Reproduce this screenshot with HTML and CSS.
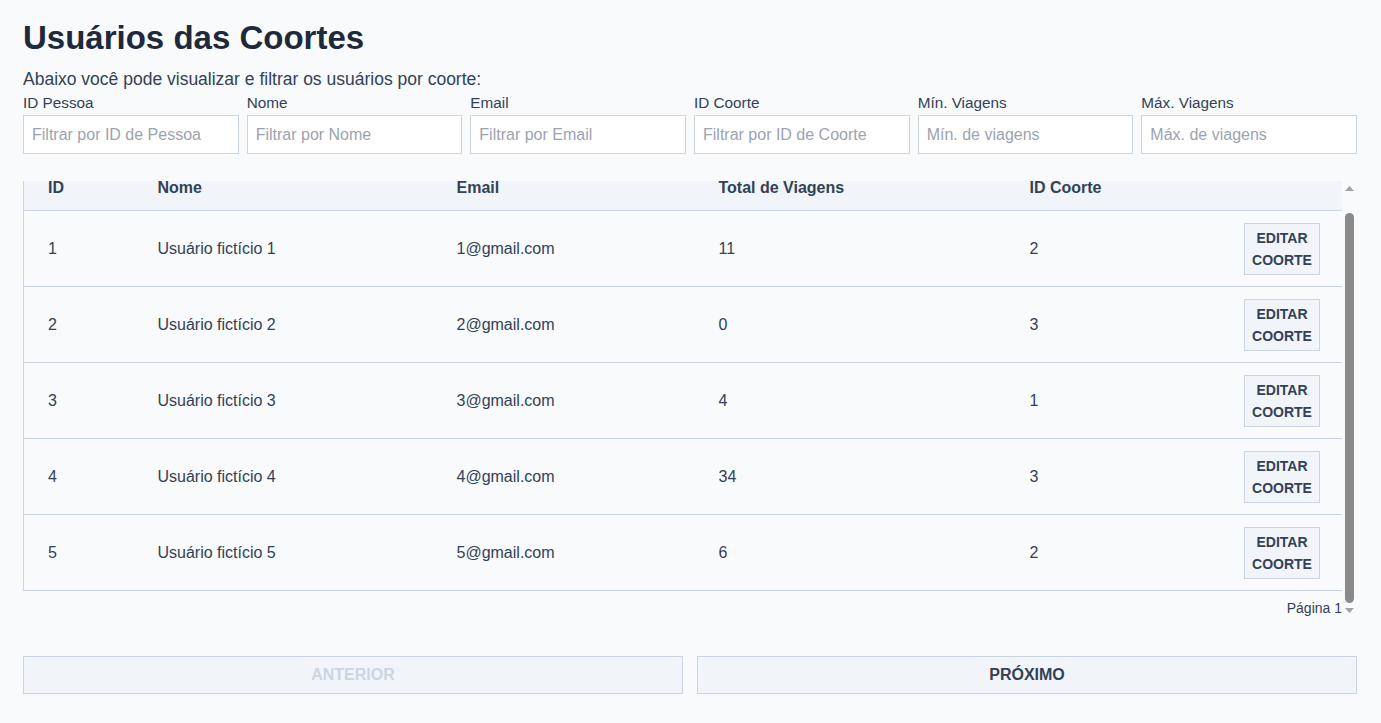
FILE: index.html
```html
<!DOCTYPE html>
<html lang="pt-BR">
<head>
<meta charset="utf-8">
<title>Usuários das Coortes</title>
<link rel="stylesheet" href="styles.css">
</head>
<body>
<main class="page">
  <h1 class="title">Usuários das Coortes</h1>
  <p class="subtitle">Abaixo você pode visualizar e filtrar os usuários por coorte:</p>
  <div class="filters">
    <label class="field"><span class="field-label">ID Pessoa</span><input class="field-input" placeholder="Filtrar por ID de Pessoa"></label>
    <label class="field"><span class="field-label">Nome</span><input class="field-input" placeholder="Filtrar por Nome"></label>
    <label class="field"><span class="field-label">Email</span><input class="field-input" placeholder="Filtrar por Email"></label>
    <label class="field"><span class="field-label">ID Coorte</span><input class="field-input" placeholder="Filtrar por ID de Coorte"></label>
    <label class="field"><span class="field-label">Mín. Viagens</span><input class="field-input" placeholder="Mín. de viagens"></label>
    <label class="field"><span class="field-label">Máx. Viagens</span><input class="field-input" placeholder="Máx. de viagens"></label>
  </div>
  <div class="table-frame">
    <div class="table-scroll" id="tableScroll">
      <table class="users">
        <caption class="caption">Página 1</caption>
        <colgroup>
          <col class="c-id"><col class="c-nome"><col class="c-email"><col class="c-total"><col class="c-coorte"><col>
        </colgroup>
        <thead>
          <tr><th>ID</th><th>Nome</th><th>Email</th><th>Total de Viagens</th><th>ID Coorte</th><th></th></tr>
        </thead>
        <tbody>
          <tr><td>1</td><td>Usuário fictício 1</td><td>1@gmail.com</td><td>11</td><td>2</td><td class="act"><button class="edit">Editar coorte</button></td></tr>
          <tr><td>2</td><td>Usuário fictício 2</td><td>2@gmail.com</td><td>0</td><td>3</td><td class="act"><button class="edit">Editar coorte</button></td></tr>
          <tr><td>3</td><td>Usuário fictício 3</td><td>3@gmail.com</td><td>4</td><td>1</td><td class="act"><button class="edit">Editar coorte</button></td></tr>
          <tr><td>4</td><td>Usuário fictício 4</td><td>4@gmail.com</td><td>34</td><td>3</td><td class="act"><button class="edit">Editar coorte</button></td></tr>
          <tr><td>5</td><td>Usuário fictício 5</td><td>5@gmail.com</td><td>6</td><td>2</td><td class="act"><button class="edit">Editar coorte</button></td></tr>
        </tbody>
      </table>
    </div>
    <div class="scrollbar" aria-hidden="true">
      <div class="sb-btn"><svg width="9" height="5" viewBox="0 0 9 5"><path d="M0 5 L4.5 0 L9 5 Z" fill="#a3a3a3"/></svg></div>
      <div class="sb-track"><div class="sb-thumb"></div></div>
      <div class="sb-btn"><svg width="9" height="5" viewBox="0 0 9 5"><path d="M0 0 L4.5 5 L9 0 Z" fill="#a3a3a3"/></svg></div>
    </div>
  </div>
  <div class="pager">
    <button class="pager-btn" disabled>Anterior</button>
    <button class="pager-btn">Próximo</button>
  </div>
</main>
<script src="script.js"></script>
</body>
</html>
```
FILE: styles.css
```css
* { box-sizing: border-box; }
html, body { margin: 0; padding: 0; }
body {
  background: #f8fafc;
  color: #334155;
  font-family: "Liberation Sans", Arial, sans-serif;
}
.page { padding: 18px 24px 0 23px; }
.title {
  margin: 0;
  font-size: 33px;
  line-height: 40px;
  font-weight: 700;
  color: #1e293b;
}
.subtitle {
  margin: 10px 0 0;
  font-size: 17.5px;
  line-height: 22px;
  color: #334155;
}
.filters {
  display: grid;
  grid-template-columns: repeat(6, minmax(0, 1fr));
  gap: 8px;
  margin-top: 4px;
}
.field { display: flex; flex-direction: column; min-width: 0; }
.field-label {
  font-size: 15.3px;
  line-height: 18px;
  color: #334155;
  margin-bottom: 3px;
}
.field-input {
  width: 100%;
  height: 39px;
  border: 1px solid #cbd5e1;
  background: #fff;
  padding: 0 8px;
  font-family: inherit;
  font-size: 16px;
  color: #334155;
  outline: none;
  border-radius: 0;
}
.field-input::placeholder { color: #9ca3af; }
.table-frame {
  margin-top: 27px;
  height: 437px;
  display: flex;
}
.table-scroll {
  flex: 1;
  min-width: 0;
  overflow: hidden;
}
.scrollbar {
  width: 15px;
  flex: none;
  display: flex;
  flex-direction: column;
  background: #f8fafc;
}
.sb-btn {
  height: 15px;
  flex: none;
  display: flex;
  align-items: center;
  justify-content: center;
}
.sb-btn svg { display: block; }
.sb-track {
  flex: 1;
  padding: 17px 3px 0;
  display: flex;
}
.sb-thumb {
  flex: 1;
  background: #8a8a8a;
  border-radius: 5px;
}
.users {
  width: 100%;
  border-collapse: collapse;
  border-left: 1px solid #cbd5e1;
  font-size: 16px;
}
.c-id { width: 110px; }
.c-nome { width: 299px; }
.c-email { width: 262px; }
.c-total { width: 311px; }
.c-coorte { width: 214px; }
.users thead th {
  background: #f1f5f9;
  text-align: left;
  font-weight: 700;
  font-size: 16px;
  line-height: 12px;
  padding: 20px 24px 16px;
  border-bottom: 1px solid #cbd5e1;
  color: #334155;
}
.users td {
  padding: 11px 24px;
  line-height: 20px;
  height: 76px;
  border-bottom: 1px solid #cbd5e1;
  color: #334155;
  vertical-align: middle;
}
.users td.act { text-align: right; padding-right: 22px; }
.edit {
  width: 76px;
  height: 52px;
  background: #f1f5f9;
  border: 1px solid #cbd5e1;
  font-family: inherit;
  font-size: 14px;
  font-weight: 700;
  line-height: 22px;
  text-transform: uppercase;
  color: #334155;
  padding: 0 4px;
  border-radius: 0;
  cursor: pointer;
}
.caption {
  caption-side: bottom;
  text-align: right;
  font-size: 14px;
  line-height: 20px;
  padding-top: 7px;
  color: #334155;
}
.pager {
  display: grid;
  grid-template-columns: 1fr 1fr;
  gap: 14px;
  margin-top: 38px;
}
.pager-btn {
  height: 38px;
  background: #f1f5f9;
  border: 1px solid #cbd5e1;
  font-family: inherit;
  font-size: 16px;
  font-weight: 700;
  text-transform: uppercase;
  color: #334155;
  border-radius: 0;
  cursor: pointer;
}
.pager-btn:disabled { color: #cbd5e1; cursor: default; }
```
FILE: script.js
```js
var box = document.getElementById('tableScroll');
box.scrollTop = box.scrollHeight;
```
